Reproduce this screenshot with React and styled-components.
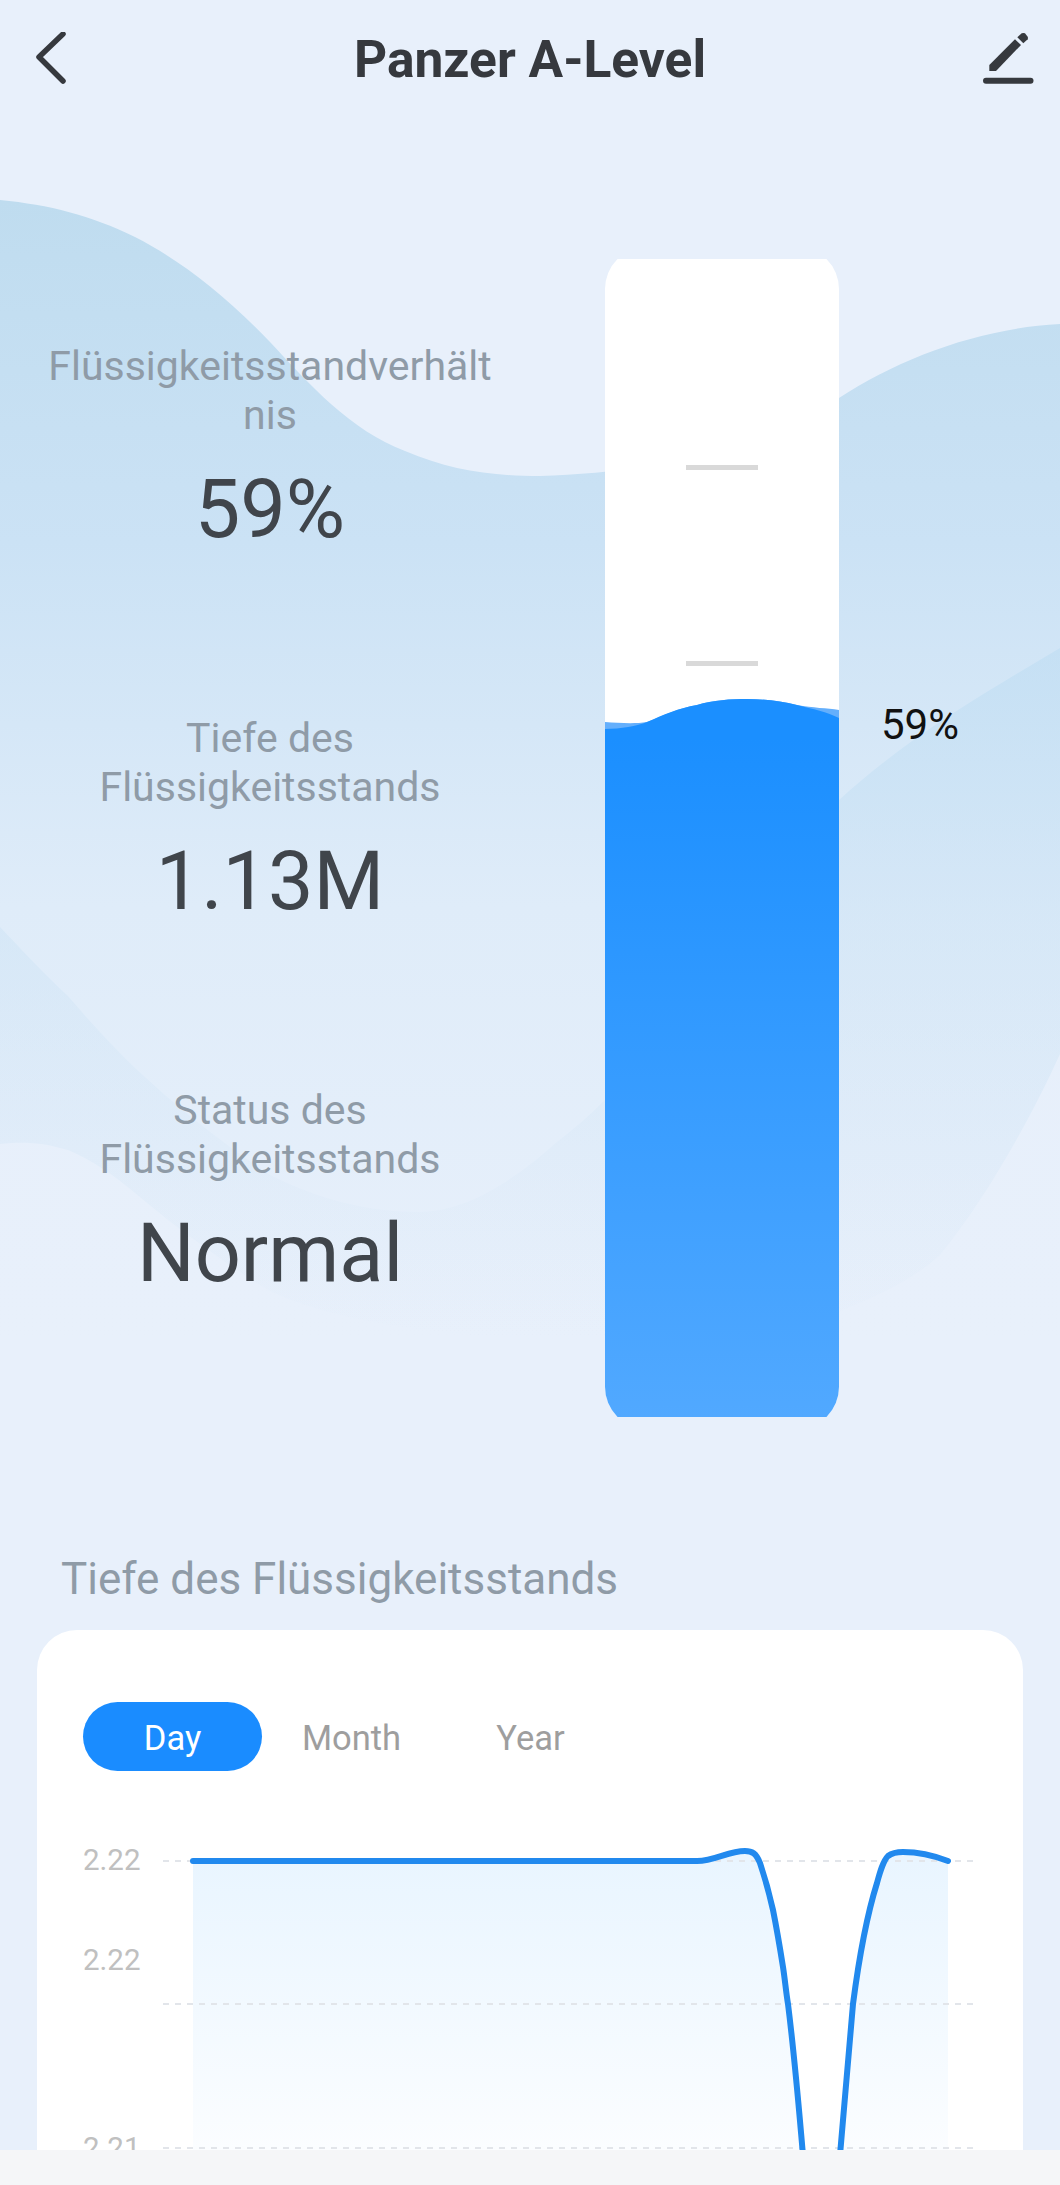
import React from "react";
import styled, { createGlobalStyle } from "styled-components";

const GlobalStyle = createGlobalStyle`
  html, body {
    margin: 0;
    padding: 0;
    background: #e8f0fb;
  }
  body {
    font-family: Roboto, "Liberation Sans", sans-serif;
  }
`;

const stats = [
  { label: "Flüssigkeitsstandverhältnis", value: "59%" },
  { label: "Tiefe des Flüssigkeitsstands", value: "1.13M" },
  { label: "Status des Flüssigkeitsstands", value: "Normal" },
];

const tabs = ["Day", "Month", "Year"];
const gridLines = [1861, 2004, 2148];
const axisLabels = [
  { y: 1870, text: "2.22" },
  { y: 1970, text: "2.22" },
  { y: 2158, text: "2.21" },
];

const curve =
  "M193 1861 H697 C715 1861 728 1851 745 1851 C752 1851 756 1853 760 1863 C765 1878 769 1892 773 1910 C777 1930 780 1948 783 1967 C785 1980 786 1992 788 2004 C795 2060 799 2110 803 2155 L840 2155 C844 2110 848 2060 853 2004 C859 1958 867 1915 877 1883 C880 1872 883 1861 888 1856 C892 1853 897 1852 903 1852 C920 1852 935 1856 948 1861";

const App = () => {
  return (
    <Page>
      <GlobalStyle />
      <Backdrop viewBox="0 0 1060 2185" aria-hidden="true">
        <defs>
          <linearGradient id="waveA" x1="0" y1="200" x2="0" y2="1340" gradientUnits="userSpaceOnUse">
            <stop offset="0" stopColor="#bfdcef" />
            <stop offset="0.3" stopColor="#cbe2f5" />
            <stop offset="0.62" stopColor="#dfecf9" />
            <stop offset="1" stopColor="#e8f0fb" />
          </linearGradient>
          <linearGradient id="waveB" x1="0" y1="650" x2="0" y2="1340" gradientUnits="userSpaceOnUse">
            <stop offset="0" stopColor="#bcdcf2" stopOpacity="0.55" />
            <stop offset="1" stopColor="#cfe2f4" stopOpacity="0" />
          </linearGradient>
          <linearGradient id="waveC" x1="0" y1="1050" x2="0" y2="1400" gradientUnits="userSpaceOnUse">
            <stop offset="0" stopColor="#e8f0fb" stopOpacity="0.9" />
            <stop offset="1" stopColor="#e8f0fb" stopOpacity="1" />
          </linearGradient>
        </defs>
        <path
          fill="url(#waveA)"
          d="M0 200 C50 205 90 215 135 237 C180 260 225 295 270 342 C310 385 350 430 405 451 C450 470 490 476 540 476 C640 474 760 450 839 398 C900 358 980 328 1060 324 V1500 H0 Z"
        />
        <path
          fill="url(#waveB)"
          d="M0 927 C22 950 45 975 68 996 C90 1022 112 1046 135 1068 C180 1110 225 1145 270 1175 C320 1200 370 1212 419 1212 C470 1212 520 1175 557 1142 C575 1128 590 1115 605 1100 C690 980 770 860 839 800 C910 735 990 690 1060 648 V1500 H0 Z"
        />
        <path
          fill="url(#waveC)"
          d="M0 1144 C25 1141 45 1143 68 1150 C92 1160 115 1176 135 1193 C158 1212 180 1230 203 1246 C225 1262 248 1278 270 1291 C340 1325 470 1340 600 1340 C700 1340 790 1335 845 1309 C880 1295 915 1278 940 1255 C985 1200 1030 1120 1060 1054 V1500 H0 Z"
        />
      </Backdrop>

      <Header>
        <IconButton viewBox="0 0 56 56" aria-label="back">
          <path d="M39 2 L15 25 L39 49" fill="none" stroke="#36393e" strokeWidth="5.5" strokeLinecap="round" strokeLinejoin="round" />
        </IconButton>
        <Title>Panzer A-Level</Title>
        <EditIcon viewBox="0 2 56 60" aria-label="edit">
          <path d="M9.3 37 L35 11.3 L41 17 L16 43 H9.3 Z" fill="#36393e" />
          <path d="M37.3 9.3 L41.7 5.3 Q43.5 4.5 45 5.3 L47.7 8.7 Q48.3 10 47.7 11.3 L43.3 15.3 Z" fill="#36393e" />
          <path d="M6 52.7 H50.5" stroke="#36393e" strokeWidth="6" strokeLinecap="round" />
        </EditIcon>
      </Header>

      <Gauge>
        <StatColumn>
          {stats.map((stat) => (
            <Stat key={stat.label}>
              <StatLabel>{stat.label}</StatLabel>
              <StatValue>{stat.value}</StatValue>
            </Stat>
          ))}
        </StatColumn>
        <BarWrap>
          <BarClip>
            <BarBody>
              <BarEmpty>
                <Tick />
                <Tick />
              </BarEmpty>
              <WaveTop viewBox="0 0 234 40" aria-hidden="true">
                <path fill="#64affc" d="M0 23 C14 24 30 25 42 23 C60 16 74 9 92 6 C108 1 126 0 142 0 C160 0 176 2 192 6 C208 9 222 9 234 11 V40 H0 Z" />
                <path fill="#1b8fff" d="M0 30 C16 30 32 27 42 23 C58 16 74 9 92 6 C108 1 126 0 142 0 C160 0 176 2 192 6 C208 10 222 13 234 19 V40 H0 Z" />
              </WaveTop>
              <BarFill />
            </BarBody>
          </BarClip>
          <BarPercent>59%</BarPercent>
        </BarWrap>
      </Gauge>

      <SectionTitle>Tiefe des Flüssigkeitsstands</SectionTitle>
      <Card>
        <TabRow>
          {tabs.map((tab, i) => (
            <Tab key={tab} $active={i === 0}>
              {tab}
            </Tab>
          ))}
        </TabRow>
        <Chart viewBox="37 1800 986 385" aria-hidden="true">
          <defs>
            <linearGradient id="area" x1="0" y1="1861" x2="0" y2="2150" gradientUnits="userSpaceOnUse">
              <stop offset="0" stopColor="#e9f5ff" />
              <stop offset="1" stopColor="#fbfdff" />
            </linearGradient>
          </defs>
          <path d={`${curve} V2200 H193 Z`} fill="url(#area)" />
          {gridLines.map((y) => (
            <line key={y} x1="163" x2="973" y1={y} y2={y} stroke="#e2e5ea" strokeWidth="2" strokeDasharray="6 6" />
          ))}
          {axisLabels.map((label) => (
            <AxisText key={label.y} x="83" y={label.y}>
              {label.text}
            </AxisText>
          ))}
          <path d={curve} fill="none" stroke="#2189ee" strokeWidth="6" strokeLinecap="round" strokeLinejoin="round" />
        </Chart>
      </Card>
      <BottomBar />
    </Page>
  );
};

const Page = styled.div`
  position: relative;
  width: 1060px;
  height: 2185px;
  overflow: hidden;
  background: #e8f0fb;
`;

const Backdrop = styled.svg`
  position: absolute;
  top: 0;
  left: 0;
  width: 1060px;
  height: 2185px;
`;

const Header = styled.header`
  position: relative;
  display: flex;
  align-items: center;
  height: 120px;
  padding: 0 24px;
`;

const IconButton = styled.svg`
  width: 56px;
  height: 56px;
  flex: none;
`;

const EditIcon = styled(IconButton)`
  height: 60px;
`;

const Title = styled.h1`
  flex: 1;
  margin: 0;
  text-align: center;
  font-size: 51.5px;
  font-weight: 700;
  line-height: 60px;
  color: #36393e;
`;

const Gauge = styled.section`
  position: relative;
  display: flex;
  margin-top: 139px;
  height: 1158px;
`;

const StatColumn = styled.div`
  display: flex;
  flex-direction: column;
  align-items: center;
  gap: 158px;
  width: 540px;
  padding-top: 83px;
  margin-right: 65px;
`;

const Stat = styled.div`
  width: 450px;
  text-align: center;
`;

const StatLabel = styled.div`
  font-size: 41px;
  line-height: 49px;
  font-weight: 400;
  color: #8f9ba7;
  overflow-wrap: anywhere;
`;

const StatValue = styled.div`
  margin-top: 24px;
  font-size: 81px;
  line-height: 92px;
  font-weight: 400;
  color: #40454b;
`;

const BarWrap = styled.div`
  position: relative;
  width: 234px;
`;

const BarClip = styled.div`
  height: 100%;
  overflow: hidden;
`;

const BarBody = styled.div`
  display: flex;
  flex-direction: column;
  height: 1182px;
  margin-top: -12px;
  border-radius: 42px;
  overflow: hidden;
  background: #fff;
`;

const BarEmpty = styled.div`
  display: flex;
  flex-direction: column;
  align-items: center;
  gap: 191px;
  height: 452px;
  padding-top: 218px;
  box-sizing: border-box;
`;

const Tick = styled.div`
  width: 72px;
  height: 5px;
  background: #d9d9d9;
`;

const WaveTop = styled.svg`
  display: block;
  width: 234px;
  height: 40px;
  flex: none;
`;

const BarFill = styled.div`
  flex: 1;
  background: linear-gradient(180deg, #1b8fff 0%, #52a9ff 100%);
`;

const BarPercent = styled.span`
  position: absolute;
  left: 276px;
  top: 442px;
  font-size: 42px;
  line-height: 48px;
  font-weight: 400;
  color: #111;
`;

const SectionTitle = styled.h2`
  position: relative;
  margin: 139px 0 28px 61px;
  font-size: 44px;
  line-height: 46px;
  font-weight: 400;
  color: #8f9ba7;
`;

const Card = styled.div`
  position: relative;
  width: 986px;
  height: 640px;
  margin-left: 37px;
  padding-top: 72px;
  box-sizing: border-box;
  border-radius: 40px;
  background: #fff;
`;

const TabRow = styled.div`
  display: flex;
  margin-left: 46px;
`;

const Tab = styled.div`
  display: flex;
  align-items: center;
  justify-content: center;
  width: 179px;
  height: 69px;
  padding-top: 2px;
  box-sizing: border-box;
  border-radius: 35px;
  font-size: 34.5px;
  font-weight: 400;
  color: ${(props) => (props.$active ? "#fff" : "#9e9e9e")};
  background: ${(props) => (props.$active ? "#1a8cff" : "transparent")};
`;

const Chart = styled.svg`
  display: block;
  width: 986px;
  height: 385px;
  margin-top: 29px;
`;

const AxisText = styled.text`
  font-family: Roboto, "Liberation Sans", sans-serif;
  font-size: 29.5px;
  font-weight: 400;
  fill: #c0c0c0;
`;

const BottomBar = styled.div`
  position: absolute;
  left: 0;
  right: 0;
  bottom: 0;
  height: 35px;
  background: #f5f6f8;
`;

export default App;
